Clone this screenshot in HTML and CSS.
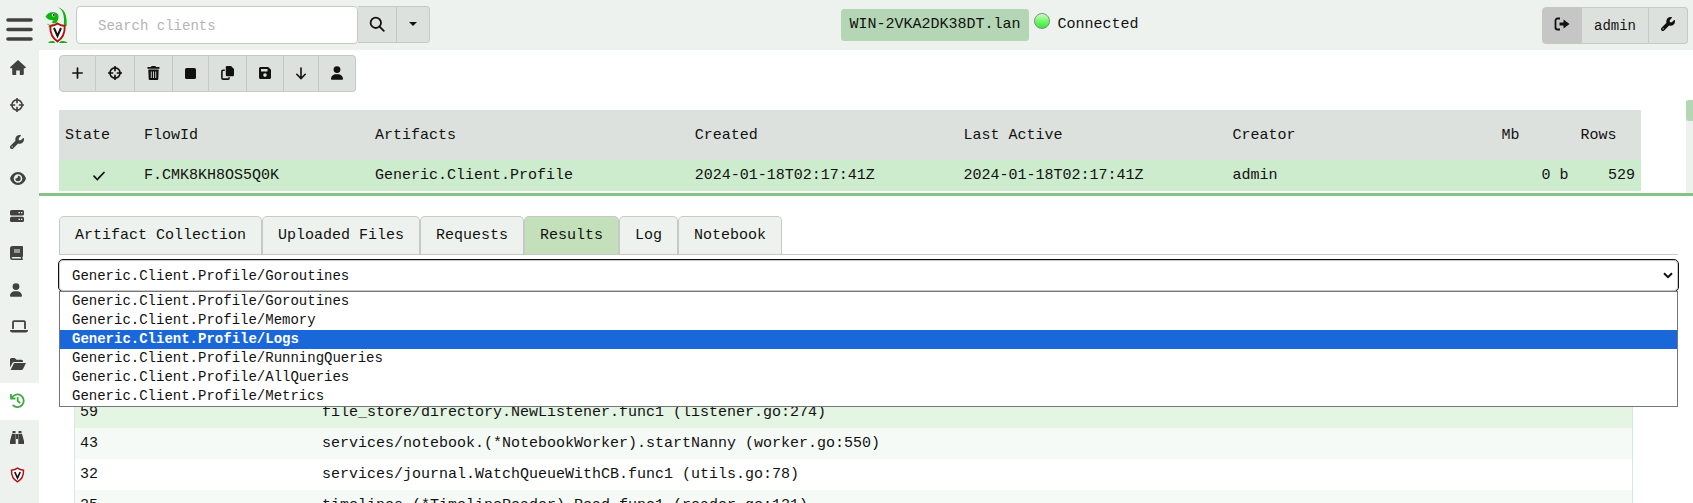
FILE: index.html
```
<!DOCTYPE html>
<html lang="en">
<head>
<meta charset="utf-8">
<title>Velociraptor Response and Monitoring</title>
<link rel="stylesheet" href="styles.css">
</head>
<body>
<svg class="defs" aria-hidden="true">
  <symbol id="i-target" viewBox="0 0 16 16"><g fill="none" stroke="currentColor" stroke-width="1.900"><circle cx="8" cy="8" r="5.800"/><path d="M8 0v6M8 10v6M0 8h6M10 8h6"/></g></symbol>
  <symbol id="i-wrench" viewBox="0 0 512 512"><path fill="currentColor" d="M352 320c88.400 0 160-71.600 160-160 0-15.300-2.200-30.100-6.200-44.200-3.100-10.800-16.400-13.200-24.300-5.300l-76.800 76.800c-3 3-7.100 4.700-11.300 4.700H336c-8.800 0-16-7.200-16-16v-57.400c0-4.200 1.700-8.300 4.700-11.300l76.800-76.800c7.900-7.900 5.400-21.200-5.300-24.300C382.100 2.200 367.300 0 352 0c-88.400 0-160 71.600-160 160 0 19.100 3.400 37.500 9.500 54.500L19.900 396.100C7.200 408.800 0 426.100 0 444.100 0 481.600 30.400 512 67.900 512c18 0 35.300-7.200 48-19.900l181.600-181.600c17 6.200 35.400 9.500 54.500 9.500zM80 408a24 24 0 1 1 0 48 24 24 0 1 1 0-48z"/></symbol>
  <symbol id="i-user" viewBox="0 0 448 512"><path fill="currentColor" d="M224 256a128 128 0 1 0 0-256 128 128 0 1 0 0 256zm-45.700 48C79.800 304 0 383.800 0 482.300 0 498.700 13.300 512 29.700 512h388.600c16.400 0 29.700-13.300 29.700-29.700 0-98.500-79.800-178.300-178.300-178.300z"/></symbol>
</svg>

<header class="topbar">
  <div class="topbar-left">
    <button class="menu" aria-label="Menu"><svg width="27" height="25" viewBox="0 0 27 25"><path d="M2 3h23M2 12.500h23M2 22h23" stroke="#414141" stroke-width="3.600" stroke-linecap="round"/></svg></button>
    <a href="#" class="logo" aria-label="Home"><svg width="24" height="38" viewBox="0 0 24 38">
      <path d="M13 1.500c6 1 9.500 7 8.600 18.500h-2.800C19.600 10 18.500 4 13 1.500z" fill="#0db50d"/>
      <path d="M.5 10.500C2 8 4 6 8 6.200c3.500 0 5.800 1.800 5.500 4.500-.2 2.500-.8 4-2 6-1.500 1-4 .8-4.800-.8 1.500-.4 1.800-1 1.700-1.700C6 14.500 2.500 14 .5 10.500z" fill="#0db50d"/>
      <path d="M2.500 18l2.500 1.500 4-1.500M3.500 21l3-1.500" stroke="#6cc86c" stroke-width="1.300" fill="none"/>
      <circle cx="8.500" cy="9" r="1.600" fill="#fff"/><circle cx="8.800" cy="9" r=".9" fill="#111"/>
      <path d="M3 37c1.500-2 3.500-2 5.500-2l2 2zM14 37l2-2c2 0 5 0 6.500 2z" fill="#0db50d"/>
      <path d="M12.500 17.500c2 1.500 4.500 2.200 7.200 2.500.3 7-2 12-7.200 15.500C7.300 32 5 27 5.300 20c2.700-.3 5.200-1 7.200-2.500z" fill="#fff" stroke="#b80f14" stroke-width="1.900"/>
      <path d="M9 22l3.500 8 3.500-8" fill="none" stroke="#111" stroke-width="2"/></svg></a>
    <form class="search">
      <input type="text" placeholder="Search clients" aria-label="Search clients">
      <button type="button" class="btn" aria-label="Search"><svg width="16" height="16" viewBox="0 0 16 16"><g fill="none" stroke="#111" stroke-width="1.800" stroke-linecap="round"><circle cx="6.800" cy="6.800" r="5.200"/><path d="M10.800 10.800l4 4"/></g></svg></button>
      <button type="button" class="btn" aria-label="Search options"><svg width="10" height="6" viewBox="0 0 10 6"><path d="M1 1h8L5 5z" fill="#111"/></svg></button>
    </form>
  </div>
  <div class="client">
    <a href="#" class="hostname">WIN-2VKA2DK38DT.lan</a>
    <span class="online"></span>
    <span>Connected</span>
  </div>
  <div class="group user">
    <button class="btn logout" aria-label="Log out"><svg width="16" height="14" viewBox="0 0 16 14"><path d="M6 1.500H3.500a2 2 0 0 0-2 2v7a2 2 0 0 0 2 2H6" fill="none" stroke="#111" stroke-width="1.800"/><path d="M5.500 5.500h4V2.500l6 4.500-6 4.500V8.500h-4z" fill="#111"/></svg></button>
    <button class="btn name">admin</button>
    <button class="btn" aria-label="Settings"><svg width="14" height="14"><use href="#i-wrench"/></svg></button>
  </div>
</header>

<div class="shell">
  <nav class="sidebar">
    <a href="#" aria-label="Home"><svg width="16" height="15" viewBox="0 0 16 15"><path fill="currentColor" d="M8 0l8 7.200-.8 1H13.800V14a1 1 0 0 1-1 1H9.800v-4.500H6.200V15h-3a1 1 0 0 1-1-1V8.200H.8L0 7.200z"/></svg></a>
    <a href="#" aria-label="Hunts"><svg width="14" height="14"><use href="#i-target"/></svg></a>
    <a href="#" aria-label="Artifacts"><svg width="14" height="14"><use href="#i-wrench"/></svg></a>
    <a href="#" aria-label="Events"><svg width="16" height="13" viewBox="0 0 16 13"><path fill="currentColor" fill-rule="evenodd" d="M8 0c4 0 7 3 8 6.500C15 10 12 13 8 13S1 10 0 6.500C1 3 4 0 8 0zm0 2.200a4.300 4.300 0 1 0 0 8.600 4.300 4.300 0 0 0 0-8.600z"/><path fill="currentColor" d="M8 3.800a2.700 2.700 0 1 1-2.700 2.700C7 6.800 8.200 5.500 8 3.800z"/></svg></a>
    <a href="#" aria-label="Server"><svg width="14" height="12" viewBox="0 0 14 12"><rect width="14" height="5.400" rx="1.500" fill="currentColor"/><rect y="6.800" width="14" height="5.200" rx="1.500" fill="currentColor"/><path fill="#eef2ee" d="M8.500 2H10v1.300H8.500zM11 2h1.300v1.300H11zM8.500 8.800H10v1.300H8.500zM11 8.800h1.300v1.300H11z"/></svg></a>
    <a href="#" aria-label="Notebooks"><svg width="13" height="14" viewBox="0 0 13 14"><path fill="currentColor" fill-rule="evenodd" d="M2.500 0H12q1 0 1 1v9q0 .8-.6 1v1.600q.6 0 .6.700T12 14H2.500A2.500 2.500 0 0 1 0 11.500v-9A2.500 2.500 0 0 1 2.500 0zM4 3.500v1h6v-1zM4 5.500v1h6v-1zM2.500 11q-.8 0-.8.800t.8.800h8.300V11z"/></svg></a>
    <a href="#" aria-label="Users"><svg width="12" height="14"><use href="#i-user"/></svg></a>
    <a href="#" aria-label="Host"><svg width="18" height="13" viewBox="0 0 18 13"><path d="M3 9V2.200Q3 1.200 4 1.200h10q1 0 1 1V9" fill="none" stroke="currentColor" stroke-width="1.800"/><path fill="currentColor" d="M0 10h18q0 2.500-2.500 2.500h-13Q0 12.500 0 10z"/></svg></a>
    <a href="#" aria-label="Files"><svg width="16" height="12" viewBox="0 0 16 12"><path fill="currentColor" d="M0 9.500v-8Q0 0 1.500 0h3.300l1.700 1.800h5q1.500 0 1.500 1.500V4H4.500Q3 4 2.300 5.300zM4.500 5H16l-3 6q-.5 1-1.500 1H.6l3-6q.3-1 .9-1z"/></svg></a>
    <a href="#" class="active" aria-label="Collections"><svg width="15" height="15" viewBox="0 0 15 15"><g fill="none" stroke="currentColor" stroke-width="1.800"><path d="M2 4.500a6.300 6.300 0 1 1 1.200 8" stroke-linecap="round"/><path d="M1 1v4.500h4.500"/><path d="M7.700 4v4l2.500 2"/></g></svg></a>
    <a href="#" aria-label="Client events"><svg width="14" height="13" viewBox="0 0 14 13"><path fill="currentColor" d="M2.500 0h3v2h-3zM8.500 0h3v2h-3zM2 2.800h3.700V13H0V10zM8.300 2.800H12L14 10v3H8.300zM6 3h2v5H6z"/></svg></a>
    <a href="#" aria-label="Virtual filesystem"><svg width="15" height="16" viewBox="0 0 15 16"><path d="M7.500 1.200C9.300 2.400 11.500 3 13.500 3.200c.2 5.300-1.500 9-6 11.600C3 12.200 1.300 8.500 1.500 3.200 3.500 3 5.700 2.400 7.500 1.200z" fill="#fff" stroke="#b80f14" stroke-width="1.500"/><path d="M4.800 5l2.700 6 2.700-6" fill="none" stroke="#111" stroke-width="1.700"/></svg></a>
  </nav>

  <main class="content">
    <section class="flows">
      <div class="group toolbar">
        <button class="btn" aria-label="New collection"><svg width="11" height="12" viewBox="0 0 11 12"><path d="M5.500 1v10M.8 6h9.400" stroke="#111" stroke-width="1.700" stroke-linecap="round"/></svg></button>
        <button class="btn" aria-label="Add to hunt"><svg width="14" height="14"><use href="#i-target"/></svg></button>
        <button class="btn" aria-label="Delete"><svg width="13" height="14" viewBox="0 0 12 14"><path fill="#111" d="M0 1h3.500L4 0h4l.5 1H12v1.800H0zM.8 3.500h10.400L10.800 13q0 1-1 1H2.200q-1 0-1-1z"/><path d="M3.800 5.500v6.500M6 5.500v6.500M8.200 5.500v6.500" stroke="#dde1dd" stroke-width=".9"/></svg></button>
        <button class="btn" aria-label="Stop"><svg width="11" height="11" viewBox="0 0 11 11"><rect width="11" height="11" rx="1.600" fill="#111"/></svg></button>
        <button class="btn" aria-label="Copy"><svg width="13" height="14" viewBox="0 0 13 14"><path fill="#111" d="M6 0h4l3 3v6q0 1.300-1.300 1.300H6Q4.800 10.300 4.800 9V1.200Q4.800 0 6 0z"/><path d="M3.800 4.300H2q-1.100 0-1.100 1.100V12q0 1.100 1.100 1.100h5q1.100 0 1.100-1.100v-.7" fill="none" stroke="#111" stroke-width="1.600"/></svg></button>
        <button class="btn" aria-label="Save"><svg width="12" height="12" viewBox="0 0 12 12"><path fill="#111" fill-rule="evenodd" d="M1.600 0h7.600L12 2.800v7.600Q12 12 10.400 12H1.600Q0 12 0 10.400V1.600Q0 0 1.600 0zM2 2v2.600h6.500V2zM6 6.300a1.800 1.800 0 1 0 0 3.600 1.800 1.800 0 0 0 0-3.600z"/></svg></button>
        <button class="btn" aria-label="Download"><svg width="10" height="13" viewBox="0 0 10 13"><path d="M5 1v10.500M.8 7.300L5 11.500l4.200-4.200" fill="none" stroke="#111" stroke-width="1.600" stroke-linecap="round"/></svg></button>
        <button class="btn" aria-label="Owner"><svg width="12" height="14"><use href="#i-user"/></svg></button>
      </div>
      <div class="flow-scroll">
        <table class="flow-table">
          <colgroup><col class="c-state"><col class="c-id"><col class="c-art"><col class="c-date"><col class="c-date"><col class="c-date"><col class="c-mb"><col class="c-rows"></colgroup>
          <thead><tr><th>State</th><th>FlowId</th><th>Artifacts</th><th>Created</th><th>Last Active</th><th>Creator</th><th>Mb</th><th>Rows</th></tr></thead>
          <tbody><tr><td class="state"><svg width="12" height="10" viewBox="0 0 12 10"><path d="M1 5.200L4.300 8.500 11 1.500" fill="none" stroke="#111" stroke-width="1.700" stroke-linecap="round"/></svg></td><td>F.CMK8KH8OS5Q0K</td><td>Generic.Client.Profile</td><td>2024-01-18T02:17:41Z</td><td>2024-01-18T02:17:41Z</td><td>admin</td><td class="num">0 b</td><td class="num">529</td></tr></tbody>
        </table>
        <div class="track"><div class="thumb"></div></div>
      </div>
    </section>

    <section class="details">
      <nav class="tabs">
        <button>Artifact Collection</button><button>Uploaded Files</button><button>Requests</button><button class="selected">Results</button><button>Log</button><button>Notebook</button>
      </nav>
      <div class="picker">
        <select aria-label="Artifact source">
          <option>Generic.Client.Profile/Goroutines</option>
          <option>Generic.Client.Profile/Memory</option>
          <option>Generic.Client.Profile/Logs</option>
          <option>Generic.Client.Profile/RunningQueries</option>
          <option>Generic.Client.Profile/AllQueries</option>
          <option>Generic.Client.Profile/Metrics</option>
        </select>
        <svg class="chevron" width="10" height="7" viewBox="0 0 10 7"><path d="M1 1.200l4 4 4-4" fill="none" stroke="#111" stroke-width="2"/></svg>
        <ul class="options">
          <li>Generic.Client.Profile/Goroutines</li>
          <li>Generic.Client.Profile/Memory</li>
          <li class="hover">Generic.Client.Profile/Logs</li>
          <li>Generic.Client.Profile/RunningQueries</li>
          <li>Generic.Client.Profile/AllQueries</li>
          <li>Generic.Client.Profile/Metrics</li>
        </ul>
      </div>
      <table class="results">
        <tbody>
          <tr class="marked"><td class="count">59</td><td>file_store/directory.NewListener.func1 (listener.go:274)</td></tr>
          <tr class="odd"><td>43</td><td>services/notebook.(*NotebookWorker).startNanny (worker.go:550)</td></tr>
          <tr><td>32</td><td>services/journal.WatchQueueWithCB.func1 (utils.go:78)</td></tr>
          <tr class="odd"><td>25</td><td>timelines.(*TimelineReader).Read.func1 (reader.go:121)</td></tr>
        </tbody>
      </table>
    </section>
  </main>
</div>
</body>
</html>
```
FILE: styles.css
```
* { box-sizing: border-box; }
body {
  margin: 0;
  height: 100vh;
  overflow: hidden;
  display: flex;
  flex-direction: column;
  background: #fff;
  color: #111;
  font: 15px/20px "Liberation Mono", monospace;
}
button, input, select { font: inherit; color: inherit; margin: 0; }
a { color: inherit; text-decoration: none; }
svg { display: block; flex: none; }
.defs { position: absolute; width: 0; height: 0; }

.topbar {
  flex: none;
  display: flex;
  justify-content: space-between;
  align-items: flex-start;
  height: 50px;
  padding: 6px 5px 0 6px;
  background: #eef2ee;
}
.topbar-left { display: flex; }
.menu { padding: 8px 0 0; border: 0; background: none; }
.logo { padding: 0 7px 0 12px; }
.search { display: flex; font-size: 14px; }
.search input {
  width: 282px;
  height: 38px;
  padding: 2px 21px 0;
  border: 1px solid #c6cac6;
  border-radius: 4px;
  background: #fff;
}
.search input::placeholder { color: #b4b4b4; opacity: 1; }
.btn {
  display: flex;
  align-items: center;
  justify-content: center;
  height: 37px;
  padding: 0 12px;
  border: 1px solid #c6cac6;
  border-left-width: 0;
  background: #dde1dd;
}
.search .btn:last-child, .group .btn:last-child { border-radius: 0 4px 4px 0; }
.search .btn { width: 39px; padding-bottom: 2px; }
.search .btn:last-child { width: 33px; }
.group { display: flex; }
.group .btn:first-child { border-left-width: 1px; border-radius: 4px 0 0 4px; }
.client { display: flex; margin-left: 8px; padding-top: 3px; }
.hostname { padding: 6px 8px; border-radius: 3px; background: #b5d6b5; }
.client span { padding-top: 6px; }
.online {
  width: 16px;
  height: 16px;
  margin: 4px 8px 0 5px;
  border: 1px solid #7d8f7d;
  border-radius: 50%;
  background: linear-gradient(#c9ffc5, #74f86c 50%, #33e936);
}
.user { padding-top: 1px; font-size: 14px; }
.user .btn { padding-bottom: 3px; }
.user .name { padding-bottom: 0; }
.user .logout { width: 40px; border-color: #c6c6c6; background: #c6c6c6; }

.shell { flex: 1; min-height: 0; display: flex; }
.sidebar { flex: none; width: 39px; background: #eef2ee; color: #414141; }
.sidebar a { display: flex; align-items: center; height: 37px; padding: 0 0 2px 10px; }
.sidebar .active { background: #fff; color: #43a843; }

.content { flex: 1; min-width: 0; }
.flows { height: 146px; overflow: hidden; border-bottom: 3px solid #84c385; }
.toolbar { padding: 5px 0 8px 20px; }
.toolbar .btn { padding-bottom: 1px; }
.flow-scroll { display: flex; justify-content: space-between; height: 93px; }
.flow-table {
  flex: 1;
  margin: 10px 45px 0 20px;
  table-layout: fixed;
  border-collapse: collapse;
  height: 81px;
}
.flow-table th, .flow-table td { padding: 0 6px; text-align: left; font-weight: 400; white-space: nowrap; }
.flow-table th { height: 50px; padding-top: 2px; background: #dde1dd; }
.flow-table td { height: 31px; background: #cdebcd; }
.flow-table .num { text-align: right; }
.flow-table .state svg { margin: 0 auto; }
.c-state { width: 5%; }
.c-id { width: 14.600%; }
.c-art { width: 20.200%; }
.c-date { width: 17%; }
.c-mb { width: 5%; }
.c-rows { width: 4.200%; }
.track { flex: none; width: 7px; background: #eef2ee; }
.thumb { height: 21px; border-radius: 3px 0 0 3px; background: #b5d6b5; }

.details { padding: 20px 15px 0 20px; }
.tabs { display: flex; border-bottom: 1px solid #c6cac6; }
.tabs button {
  height: 38px;
  padding: 0 15px;
  border: 1px solid #c6cac6;
  border-bottom-width: 0;
  border-radius: 5px 5px 0 0;
  background: #eef2ee;
}
.tabs .selected { background: #c4e0ba; }
.picker { position: relative; margin-top: 5px; font-size: 14px; }
.picker select {
  display: block;
  width: 100%;
  height: 31px;
  padding: 0 12px;
  border: 1px solid #c6cac6;
  border-radius: 4px;
  outline: 1px solid #111;
  background: #fff;
  appearance: none;
}
.chevron { position: absolute; top: 12px; right: 5px; }
.options {
  position: absolute;
  top: 100%;
  left: 0;
  right: 0;
  margin: 0;
  padding: 0;
  list-style: none;
  border: 1px solid #767676;
  background: #fff;
}
.options li { height: 19px; padding-left: 12px; line-height: 19px; }
.options .hover { background: #1967d8; color: #fff; font-weight: 700; }

.results {
  width: calc(100% - 60px);
  margin: 106px 45px 0 15px;
  border-spacing: 0;
  border: 1px solid #dbe6e6;
  border-width: 0 1px;
}
.results td { height: 31px; padding: 0 6px 0 5px; }
.results .count { width: 242px; }
.results .marked { background: #e4f5e4; }
.results .odd { background: #f6faf7; }
```
